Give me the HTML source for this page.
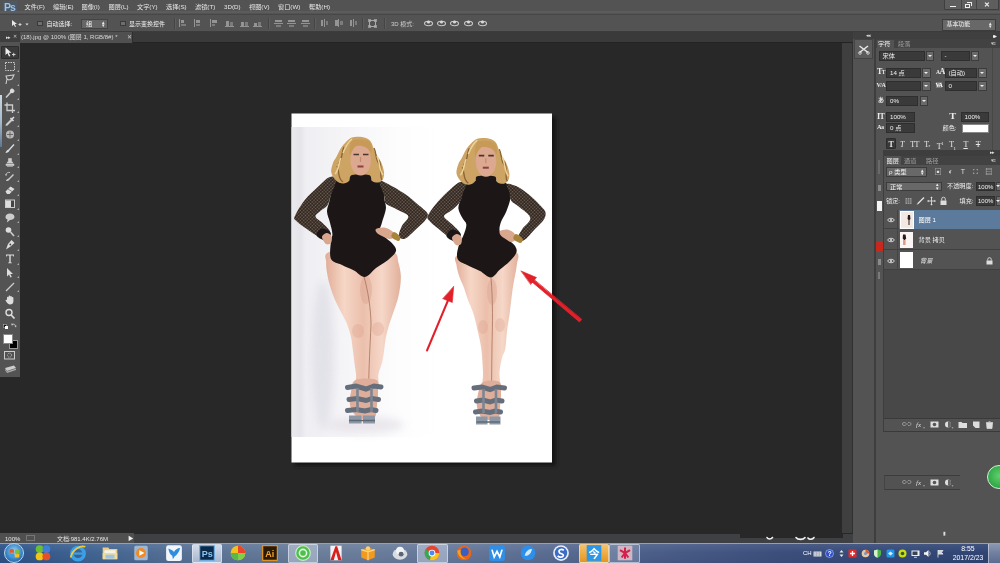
<!DOCTYPE html>
<html lang="zh-CN">
<head>
<meta charset="utf-8">
<title>Photoshop</title>
<style>
*{box-sizing:border-box;margin:0;padding:0}
i{font-style:normal}
html,body{width:1000px;height:563px;overflow:hidden;background:#282828}
body{will-change:transform;transform:translateZ(0);position:relative;font-family:"Liberation Sans","Noto Sans CJK SC",sans-serif;font-size:6.2px;color:#dcdcdc;line-height:1}
.abs{position:absolute}
#menubar{left:0;top:0;width:1000px;height:14px;background:linear-gradient(#535353 11px,#5c5c5c 11.5px,#5c5c5c 12.5px,#535353 13px)}
#menubar span{position:absolute;top:4.2px;white-space:nowrap;color:#e6e6e6}
#optbar{left:0;top:14px;width:1000px;height:18px;background:#535353;border-top:1px solid #474747;border-bottom:1px solid #3c3c3c}
#tabbar{left:0;top:32px;width:853px;height:11px;background:#3a3a3a;border-bottom:1px solid #232323}
#work{left:20px;top:43px;width:822px;height:491px;background:#282828}
#vscroll{left:841.5px;top:43px;width:11.5px;height:491px;background:#3f3f3f;border-right:1.5px solid #303030}
#status{left:0;top:533px;width:853px;height:10px;background:linear-gradient(#282828 1px,#3e4043 1.5px)}
#tools{left:0;top:32px;width:20px;height:345px;background:#535353}
#toolsbelow{left:0;top:377px;width:20px;height:156px;background:#282828}
#dock{left:853px;top:32px;width:147px;height:511px;background:#535353}
#taskbar{left:0;top:542.5px;width:1000px;height:20.5px}
.wb{background:#6a6a6a;border:1px solid #3e3e3e;border-radius:1px}
.wb u{position:absolute;background:#eee;text-decoration:none}
.cb{width:5.5px;height:5.5px;background:#6e6e6e;border:1px solid #3a3a3a}
.sep{top:3px;width:1px;height:11px;background:#454545;border-right:1px solid #5e5e5e;width:2px;text-decoration:none}
.al{width:10px;height:9px}
.al u{position:absolute;background:#949494;text-decoration:none}
.fb{background:#3a3a3a;border:1px solid #2e2e2e;overflow:hidden}
.fb span{position:absolute;left:3px;top:1px;color:#f0f0f0;white-space:nowrap}
.ab{background:#6a6a6a;border:1px solid #3c3c3c}
.ab b{position:absolute;left:50%;top:50%;margin:-1px 0 0 -2px;width:0;height:0;border-left:2px solid transparent;border-right:2px solid transparent;border-top:2.500px solid #f0f0f0}
.ic{color:#ececec;font-size:8px;font-weight:bold;font-family:"Liberation Serif",serif;white-space:nowrap;letter-spacing:-0.5px;margin-top:-0.5px}
.ic small{font-size:5.5px}
.tt{width:10px;text-align:center;color:#e8e8e8;font-size:8px;font-family:"Liberation Serif",serif;white-space:nowrap;letter-spacing:-0.500px}
.tt small,.tt sup,.tt sub{font-size:5px}
</style>
</head>
<body>
<!-- MENUBAR -->
<div id="menubar" class="abs">
<b class="abs" style="left:3px;top:1px;width:13.500px;height:10.500px;background:rgba(60,105,150,0.28)"></b><b class="abs" style="left:4px;top:1.500px;font-size:10.500px;color:#9cc3e6;font-weight:bold;letter-spacing:-1px;font-family:'Liberation Sans',sans-serif">Ps</b>
<span style="left:24.500px">文件(F)</span><span style="left:53px">编辑(E)</span><span style="left:81.500px">图像(I)</span><span style="left:108.500px">图层(L)</span><span style="left:137px">文字(Y)</span><span style="left:166px">选择(S)</span><span style="left:195px">滤镜(T)</span><span style="left:224px">3D(D)</span><span style="left:249px">视图(V)</span><span style="left:278px">窗口(W)</span><span style="left:309px">帮助(H)</span>
<div class="abs" style="left:944px;top:0;width:54.500px;height:9.500px;background:#5e5e5e;border:1px solid #3f3f3f;border-top:none;border-radius:0 0 1.500px 1.500px">
<i class="abs" style="left:5px;top:5.500px;width:6px;height:1.800px;background:#f0f0f0"></i>
<i class="abs" style="left:15.500px;top:0;width:1px;height:8.500px;background:#444"></i>
<i class="abs" style="left:20px;top:3.500px;width:5px;height:4px;border:1px solid #eee"></i><i class="abs" style="left:22px;top:1.800px;width:5px;height:4px;border:1px solid #eee;border-left:none;border-bottom:none"></i>
<i class="abs" style="left:30.500px;top:0;width:1px;height:8.500px;background:#444"></i>
<em class="abs" style="left:38.500px;top:0.500px;font-size:7px;color:#f0f0f0;font-style:normal;font-weight:bold">✕</em>
</div>
</div>
<!-- OPTIONS -->
<div id="optbar" class="abs">
<svg class="abs" style="left:11px;top:4px" width="18" height="9" viewBox="0 0 18 9"><path d="M1,1 L1,7 L2.800,5.500 L4,8 L5,7.500 L3.800,5 L6,5 Z" fill="#e8e8e8"/><path d="M7.500,5.500 h3 M9,4 v3" stroke="#ddd" stroke-width="0.900"/><path d="M14.500,4.500 h3 l-1.500,2z" fill="#ddd"/></svg>
<i class="abs cb" style="left:37px;top:5.500px"></i>
<span class="abs" style="left:46.500px;top:6px;color:#f0f0f0;font-size:6px">自动选择:</span>
<i class="abs" style="left:81px;top:4px;width:27px;height:9.500px;background:#666;border:1px solid #444"><span class="abs" style="left:4px;top:1px;color:#f4f4f4">组</span><span class="abs" style="left:20px;top:0.500px;font-size:5px;color:#eee;line-height:3.500px">▴<br>▾</span></i>
<i class="abs cb" style="left:120px;top:5.500px"></i>
<span class="abs" style="left:129px;top:6px;color:#f0f0f0;font-size:6px">显示变换控件</span>
<u class="abs sep" style="left:174px"></u><u class="abs sep" style="left:268px"></u><u class="abs sep" style="left:314px"></u><u class="abs sep" style="left:362px"></u><u class="abs sep" style="left:384px"></u>
<i class="abs al" style="left:179px;top:4px"><u style="left:0;top:0;width:1px;height:8px"></u><u style="left:2px;top:1px;width:3px;height:2.5px"></u><u style="left:2px;top:4.5px;width:5px;height:2.5px;background:#7c7c7c"></u></i><i class="abs al" style="left:194px;top:4px"><u style="left:0;top:0;width:1px;height:8px"></u><u style="left:2px;top:1px;width:4px;height:2.5px"></u><u style="left:2px;top:4.5px;width:4px;height:2.5px;background:#7c7c7c"></u></i><i class="abs al" style="left:210px;top:4px"><u style="left:0;top:0;width:1px;height:8px"></u><u style="left:2px;top:1px;width:5px;height:2.5px"></u><u style="left:2px;top:4.5px;width:3px;height:2.5px;background:#7c7c7c"></u></i><i class="abs al" style="left:224.5px;top:4px"><u style="left:0;top:7px;width:9px;height:1px"></u><u style="left:1px;top:2px;width:3px;height:5px"></u><u style="left:5px;top:3px;width:3px;height:4px;background:#7c7c7c"></u></i><i class="abs al" style="left:239.5px;top:4px"><u style="left:0;top:7px;width:9px;height:1px"></u><u style="left:1px;top:3px;width:3px;height:4px"></u><u style="left:5px;top:3px;width:3px;height:4px;background:#7c7c7c"></u></i><i class="abs al" style="left:253px;top:4px"><u style="left:0;top:7px;width:9px;height:1px"></u><u style="left:1px;top:4px;width:3px;height:3px"></u><u style="left:5px;top:3px;width:3px;height:4px;background:#7c7c7c"></u></i><i class="abs al" style="left:274px;top:4px"><u style="left:0;top:4px;width:9px;height:1px"></u><u style="left:1px;top:1px;width:7px;height:2px"></u><u style="left:2px;top:6px;width:5px;height:2px;background:#7c7c7c"></u></i><i class="abs al" style="left:287px;top:4px"><u style="left:0;top:4px;width:9px;height:1px"></u><u style="left:1px;top:1px;width:7px;height:2px"></u><u style="left:2px;top:6px;width:5px;height:2px;background:#7c7c7c"></u></i><i class="abs al" style="left:300.5px;top:4px"><u style="left:0;top:4px;width:9px;height:1px"></u><u style="left:1px;top:1px;width:7px;height:2px"></u><u style="left:2px;top:6px;width:5px;height:2px;background:#7c7c7c"></u></i><i class="abs al" style="left:319.5px;top:4px"><u style="left:4px;top:0;width:1px;height:8px"></u><u style="left:1px;top:1px;width:2.5px;height:6px"></u><u style="left:6px;top:2px;width:2.5px;height:4px;background:#7c7c7c"></u></i><i class="abs al" style="left:334px;top:4px"><u style="left:4px;top:0;width:1px;height:8px"></u><u style="left:1px;top:1px;width:2.5px;height:6px"></u><u style="left:6px;top:2px;width:2.5px;height:4px;background:#7c7c7c"></u></i><i class="abs al" style="left:348.5px;top:4px"><u style="left:4px;top:0;width:1px;height:8px"></u><u style="left:1px;top:1px;width:2.5px;height:6px"></u><u style="left:6px;top:2px;width:2.5px;height:4px;background:#7c7c7c"></u></i><i class="abs al" style="left:367.5px;top:3.5px"><u style="left:0;top:0;width:3px;height:3px"></u><u style="left:6px;top:0;width:3px;height:3px"></u><u style="left:0;top:6px;width:3px;height:3px"></u><u style="left:6px;top:6px;width:3px;height:3px"></u><u style="left:1px;top:1px;width:7px;height:7px;background:none;border:1px solid #aaa"></u></i><i class="abs" style="left:424.0px;top:4px;width:9px;height:8px"><svg width="9" height="8" viewBox="0 0 9 8"><ellipse cx="4.500" cy="4.500" rx="4" ry="2.200" fill="none" stroke="#c8c8c8" stroke-width="1.100"/><circle cx="4.500" cy="3" r="1.600" fill="#d8d8d8"/></svg></i><i class="abs" style="left:436.5px;top:4px;width:9px;height:8px"><svg width="9" height="8" viewBox="0 0 9 8"><ellipse cx="4.500" cy="4.500" rx="4" ry="2.200" fill="none" stroke="#c8c8c8" stroke-width="1.100"/><circle cx="4.500" cy="3" r="1.600" fill="#d8d8d8"/></svg></i><i class="abs" style="left:449.5px;top:4px;width:9px;height:8px"><svg width="9" height="8" viewBox="0 0 9 8"><ellipse cx="4.500" cy="4.500" rx="4" ry="2.200" fill="none" stroke="#c8c8c8" stroke-width="1.100"/><circle cx="4.500" cy="3" r="1.600" fill="#d8d8d8"/></svg></i><i class="abs" style="left:463.5px;top:4px;width:9px;height:8px"><svg width="9" height="8" viewBox="0 0 9 8"><ellipse cx="4.500" cy="4.500" rx="4" ry="2.200" fill="none" stroke="#c8c8c8" stroke-width="1.100"/><circle cx="4.500" cy="3" r="1.600" fill="#d8d8d8"/></svg></i><i class="abs" style="left:478.0px;top:4px;width:9px;height:8px"><svg width="9" height="8" viewBox="0 0 9 8"><ellipse cx="4.500" cy="4.500" rx="4" ry="2.200" fill="none" stroke="#c8c8c8" stroke-width="1.100"/><circle cx="4.500" cy="3" r="1.600" fill="#d8d8d8"/></svg></i>
<span class="abs" style="left:391px;top:6px;color:#cfcfcf;font-size:6px">3D 模式:</span>
<i class="abs" style="left:942px;top:4px;width:54px;height:11.500px;background:#686868;border:1px solid #3c3c3c"><span class="abs" style="left:3.500px;top:2px;color:#f4f4f4;font-size:5.900px">基本功能</span><span class="abs" style="left:46px;top:1.500px;font-size:5px;color:#eee;line-height:3.500px">▴<br>▾</span></i>
</div>
<!-- TABBAR -->
<div id="tabbar" class="abs">
<div class="abs" style="left:20px;top:0;width:113px;height:10.500px;background:#505050;border-right:1px solid #2e2e2e"><span class="abs" style="left:1px;top:2px;color:#d8d8d8;white-space:nowrap;font-size:6px">(18).jpg @ 100% (图层 1, RGB/8#) *</span><span class="abs" style="left:107px;top:2.500px;color:#ccc;font-size:5.500px">✕</span></div>
</div>
<!-- WORK -->
<div id="work" class="abs"></div>
<div id="vscroll" class="abs"></div>
<!-- PHOTO -->
<svg class="abs" style="left:0;top:0" width="1000" height="563" viewBox="0 0 1000 563">
<defs>
<linearGradient id="bg1" x1="0" x2="1" y1="0" y2="0"><stop offset="0" stop-color="#e9e9ee"/><stop offset="0.060" stop-color="#e4e4ea"/><stop offset="0.100" stop-color="#efeff3"/><stop offset="0.450" stop-color="#f7f7f9"/><stop offset="0.750" stop-color="#fdfdfe"/><stop offset="1" stop-color="#ffffff"/></linearGradient>
<linearGradient id="skin" x1="0" x2="1" y1="0" y2="0"><stop offset="0" stop-color="#e0ad98"/><stop offset="0.250" stop-color="#f6d6c6"/><stop offset="0.500" stop-color="#ebbfac"/><stop offset="0.750" stop-color="#f6d7c8"/><stop offset="1" stop-color="#e1b09b"/></linearGradient>
<pattern id="mesh" width="2.400" height="2.400" patternUnits="userSpaceOnUse" patternTransform="rotate(45)"><rect width="2.400" height="2.400" fill="#2c2420"/><circle cx="1.200" cy="1.200" r="0.750" fill="#7d6a59"/></pattern>
<filter id="blur2" x="-5%" y="-5%" width="110%" height="110%"><feGaussianBlur stdDeviation="1.400"/></filter>
<filter id="blur3" x="-50%" y="-50%" width="200%" height="200%"><feGaussianBlur stdDeviation="4"/></filter>
<filter id="blur1" x="-5%" y="-5%" width="110%" height="110%"><feGaussianBlur stdDeviation="0.550"/></filter>
</defs>
<rect x="295" y="117" width="261.500" height="349.500" fill="#191919" filter="url(#blur2)"/>
<rect x="291.500" y="113.500" width="260.500" height="349" fill="#ffffff"/>
<rect x="291.500" y="127" width="146" height="310" fill="url(#bg1)"/>
<ellipse cx="323" cy="355" rx="11" ry="75" fill="#dcdce4" opacity="0.700" filter="url(#blur3)"/>
<ellipse cx="365" cy="425" rx="40" ry="8" fill="#e6e2e8" opacity="0.800" filter="url(#blur3)"/>
<g filter="url(#blur1)">
<g id="fig1">
<path d="M329.0,252.0 C322.5,254.9 326.5,258.6 326.2,262.4 C325.9,266.2 326.7,270.8 327.4,274.9 C328.1,279.0 329.1,283.1 330.4,287.3 C331.6,291.5 333.1,295.7 334.9,299.8 C336.7,303.9 339.0,308.1 341.1,312.2 C343.2,316.3 345.7,320.5 347.3,324.7 C348.9,328.9 350.1,333.0 351.0,337.1 C351.9,341.2 352.2,345.5 352.8,349.6 C353.4,353.8 353.8,357.9 354.3,362.0 C354.8,366.1 355.5,369.7 356.0,374.4 C356.5,379.1 353.9,387.4 357.3,390.0 C360.8,392.6 373.2,392.6 376.7,390.0 C380.2,387.4 377.5,379.1 378.4,374.4 C379.3,369.7 381.2,366.1 382.2,362.0 C383.2,357.9 383.6,353.8 384.2,349.6 C384.8,345.5 385.1,341.2 385.9,337.1 C386.7,333.0 387.9,328.9 389.1,324.7 C390.4,320.5 392.0,316.3 393.4,312.2 C394.8,308.1 396.5,303.9 397.6,299.8 C398.7,295.7 399.6,291.5 400.1,287.3 C400.6,283.1 401.1,279.0 400.8,274.9 C400.5,270.8 399.6,266.2 398.4,262.4 C397.2,258.6 399.0,254.9 393.4,252.0 C387.8,249.1 375.7,245.0 365.0,245.0 C354.3,245.0 335.5,249.1 329.0,252.0Z" fill="url(#skin)" />
<ellipse cx="358" cy="331" rx="6" ry="7" fill="#dc9c88" opacity="0.300"/><ellipse cx="378" cy="329" rx="6" ry="7" fill="#dc9c88" opacity="0.300"/><ellipse cx="366" cy="290" rx="6" ry="14" fill="#d9a08c" opacity="0.400"/>
<path d="M363.500,275 C368,290 371,310 371,325 C370,345 369,365 368.500,390" stroke="#b07a62" stroke-width="0.900" fill="none"/>
<path d="M355.5,380.0 C359.8,378.0 372.8,378.0 376.5,380.0 C380.2,382.0 377.9,387.8 378.0,392.0 C378.1,396.2 377.5,400.8 377.0,405.0 C376.5,409.2 376.8,414.7 375.0,417.0 C373.2,419.3 369.0,419.0 366.0,419.0 C363.0,419.0 359.7,419.3 357.0,417.0 C354.3,414.7 351.0,409.2 350.0,405.0 C349.0,400.8 350.1,396.2 351.0,392.0 C351.9,387.8 351.2,382.0 355.5,380.0Z" fill="#dfae9a" />
<path d="M347.500,387.500 L356,386 L366,389 L374,386 L381,387" stroke="#656e7a" stroke-width="5" fill="none" stroke-linecap="round"/>
<path d="M349,399.500 L357,398.500 L366,400.500 L372,398.500 L378.500,399.500" stroke="#656e7a" stroke-width="5" fill="none" stroke-linecap="round"/>
<path d="M347.500,410.500 L356,409.500 L365,411 L371,409.500 L376,410.500" stroke="#656e7a" stroke-width="5" fill="none" stroke-linecap="round"/>
<path d="M357.500,388 V412 M371.500,388 V412" stroke="#7c8591" stroke-width="2.600" fill="none"/>
<path d="M349,415.500 h12.500 v8 h-12.500z M363,415.500 h12 v8 h-12z" fill="#8d98a6"/>
<path d="M349,420.500h26" stroke="#5f6874" stroke-width="1.500"/>
<path d="M350,172 h21 v12 h-21z" fill="#1d1919"/>
<path d="M336.3,179.6 C339.0,177.4 344.1,177.0 348.0,177.0 C351.9,177.0 356.0,179.5 360.0,179.5 C364.0,179.5 368.5,176.7 372.0,177.0 C375.5,177.3 378.9,179.3 381.0,181.5 C383.1,183.7 383.9,187.1 384.5,190.0 C385.1,192.9 384.1,195.7 384.3,198.8 C384.5,201.9 386.3,204.4 385.9,208.4 C385.5,212.4 382.9,218.9 381.9,222.7 C380.9,226.5 379.3,228.4 380.0,231.0 C380.7,233.6 383.9,235.9 386.0,238.0 C388.1,240.1 390.6,241.3 392.3,243.5 C394.0,245.7 396.7,248.2 396.0,251.0 C395.3,253.8 391.3,257.2 388.0,260.0 C384.7,262.8 379.8,265.2 376.0,268.0 C372.2,270.8 368.7,276.6 365.0,277.0 C361.3,277.4 357.8,272.5 354.0,270.5 C350.2,268.5 345.8,266.9 342.0,265.0 C338.2,263.1 332.9,262.8 331.0,259.0 C329.1,255.2 330.6,246.2 330.8,242.0 C331.0,237.8 332.5,237.2 332.4,234.0 C332.3,230.8 330.9,226.4 330.0,222.7 C329.1,218.9 327.1,214.9 327.0,211.5 C326.9,208.1 328.4,205.6 329.2,202.0 C330.0,198.4 330.8,193.7 332.0,190.0 C333.2,186.3 333.6,181.8 336.3,179.6Z" fill="#1d1919" />
<path d="M336.5,179.0 C336.2,176.0 332.1,176.0 329.2,177.2 C326.2,178.4 322.9,182.1 318.8,186.0 C314.7,189.9 308.4,195.3 304.4,200.4 C300.4,205.5 296.1,212.9 294.8,216.3 C293.5,219.7 294.0,218.6 296.4,221.0 C298.8,223.4 305.1,227.9 309.2,230.7 C313.3,233.5 318.4,237.1 321.2,238.0 C324.0,238.9 324.5,237.1 326.0,236.0 C327.5,234.9 330.5,233.6 330.0,231.5 C329.5,229.4 325.4,226.0 323.0,223.5 C320.6,221.0 315.8,218.8 315.5,216.6 C315.2,214.4 319.0,212.3 321.0,210.5 C323.0,208.7 325.6,208.1 327.3,205.5 C329.0,202.9 329.5,199.4 331.0,195.0 C332.5,190.6 336.8,182.0 336.5,179.0Z" fill="url(#mesh)" />
<path d="M379.5,181.2 C380.3,179.4 384.8,182.3 389.0,184.4 C393.2,186.5 400.2,190.7 405.0,194.0 C409.8,197.3 414.2,201.2 417.9,204.4 C421.6,207.6 426.1,210.7 427.4,213.2 C428.7,215.7 427.6,216.9 425.8,219.5 C424.0,222.1 419.8,225.8 416.3,229.0 C412.8,232.2 407.9,237.5 405.0,238.7 C402.1,239.9 399.5,238.1 399.0,236.0 C398.5,233.9 400.3,229.3 401.9,226.0 C403.4,222.7 408.9,219.0 408.3,216.3 C407.7,213.6 401.7,212.1 398.0,210.0 C394.3,207.9 388.2,206.1 385.9,203.6 C383.6,201.1 385.1,198.7 384.0,195.0 C382.9,191.3 378.7,183.0 379.5,181.2Z" fill="url(#mesh)" />
<path d="M316.5,235.0 C316.4,233.2 319.2,228.9 321.5,228.5 C323.8,228.1 329.3,230.5 330.5,232.5 C331.7,234.5 329.9,239.3 328.5,240.5 C327.1,241.7 324.0,240.4 322.0,239.5 C320.0,238.6 316.6,236.8 316.5,235.0Z" fill="#1d1919" />
<path d="M376.0,229.0 C377.2,228.1 381.3,227.2 384.0,227.5 C386.7,227.8 390.2,229.6 392.0,231.0 C393.8,232.4 395.3,234.7 395.0,236.0 C394.7,237.3 392.2,239.0 390.0,239.0 C387.8,239.0 384.2,237.0 382.0,236.0 C379.8,235.0 378.0,234.2 377.0,233.0 C376.0,231.8 374.8,229.9 376.0,229.0Z" fill="#d9a78e" />
<path d="M394.0,232.0 C395.4,231.9 399.2,235.0 400.0,236.5 C400.8,238.0 399.9,240.9 398.5,241.0 C397.1,241.1 392.2,238.5 391.5,237.0 C390.8,235.5 392.6,232.1 394.0,232.0Z" fill="#a8843a" />
<path d="M322.0,237.0 C322.1,235.2 324.9,233.2 326.5,233.0 C328.1,232.8 330.8,234.3 331.5,236.0 C332.2,237.7 331.9,241.7 331.0,243.0 C330.1,244.3 327.5,245.0 326.0,244.0 C324.5,243.0 321.9,238.8 322.0,237.0Z" fill="#d9a78e" />
<path d="M358.0,136.8 C360.3,136.9 363.8,137.1 366.0,138.0 C368.2,138.9 369.5,139.7 371.0,142.0 C372.5,144.3 373.3,148.7 375.0,152.0 C376.7,155.3 379.5,158.7 381.0,162.0 C382.5,165.3 383.7,169.2 384.0,172.0 C384.3,174.8 383.9,177.2 383.0,179.0 C382.1,180.8 380.3,182.2 378.5,182.5 C376.7,182.8 373.6,182.2 372.0,181.0 C370.4,179.8 372.3,176.0 369.0,175.0 C365.7,174.0 355.3,174.0 352.0,175.0 C348.7,176.0 350.5,179.6 349.0,181.0 C347.5,182.4 345.2,183.6 343.0,183.5 C340.8,183.4 338.0,182.4 336.0,180.5 C334.0,178.6 331.7,175.2 331.2,172.3 C330.7,169.4 332.2,165.5 333.0,163.0 C333.8,160.5 334.9,159.8 336.2,157.3 C337.5,154.8 339.2,150.7 341.0,148.0 C342.8,145.3 344.9,142.9 346.7,141.2 C348.5,139.4 350.1,138.2 352.0,137.5 C353.9,136.8 355.7,136.7 358.0,136.8Z" fill="#cda463" />
<path d="M337.0,166.0 C340.0,172.0 337.0,178.0 343.0,182.0 M379.0,160.0 C383.0,168.0 379.0,176.0 382.0,180.0 M344.0,147.0 C341.0,153.0 343.0,159.0 338.0,164.0 M374.0,148.0 C377.0,154.0 375.0,160.0 380.0,165.0" stroke="#8a6234" stroke-width="1.300" fill="none"/>
<path d="M341.0,158.0 C338.0,164.0 339.0,170.0 335.0,174.0 M377.0,156.0 C380.0,162.0 379.0,170.0 383.0,175.0 M352.0,139.0 C347.0,143.0 345.0,148.0 343.0,153.0" stroke="#ecd498" stroke-width="1.500" fill="none"/>
<ellipse cx="360.7" cy="160.0" rx="10.300" ry="15.500" fill="#dca88f"/>
<path d="M352.0,140.5 C356.0,139.0 365.0,139.0 370.0,142.0 C372.0,146.0 372.0,150.0 371.5,153.0 C368.0,147.0 362.0,145.0 356.0,146.0 C353.0,148.0 351.0,152.0 350.0,156.0 C349.0,150.0 350.0,144.0 352.0,140.5Z" fill="#c89a58"/>
<path d="M353.5,154.5h5.500M363.0,154.5h5.500" stroke="#4a342e" stroke-width="1.700"/>
<path d="M357.5,166.5h6" stroke="#8c3f42" stroke-width="2"/>
<path d="M360.5,157.0 v5" stroke="#c08a72" stroke-width="1.200"/>
</g>
<g id="fig2">
<path d="M457.6,255.0 C452.4,258.3 456.2,261.3 456.5,265.0 C456.8,268.7 458.3,273.4 459.5,277.0 C460.7,280.6 462.1,282.8 463.5,286.6 C464.9,290.4 466.4,295.6 468.0,300.0 C469.6,304.4 471.7,308.1 473.3,313.3 C474.9,318.5 476.4,325.1 477.7,331.0 C479.0,336.9 480.4,342.0 481.3,348.8 C482.2,355.6 482.6,365.1 483.0,372.0 C483.4,378.9 480.8,387.0 483.5,390.0 C486.2,393.0 496.3,393.0 499.0,390.0 C501.7,387.0 499.0,377.3 499.5,372.0 C500.0,366.7 501.0,361.9 502.0,358.0 C503.0,354.1 504.5,353.3 505.3,348.8 C506.1,344.3 506.3,336.9 507.0,331.0 C507.7,325.1 508.7,320.7 509.7,313.3 C510.7,305.9 511.8,294.7 513.0,286.6 C514.2,278.6 516.3,270.8 516.8,265.0 C517.3,259.2 520.8,255.3 516.0,252.0 C511.2,248.7 497.7,244.5 488.0,245.0 C478.3,245.5 462.9,251.7 457.6,255.0Z" fill="url(#skin)" />
<ellipse cx="483" cy="327" rx="5" ry="7" fill="#dc9c88" opacity="0.300"/><ellipse cx="500" cy="325" rx="5" ry="7" fill="#dc9c88" opacity="0.300"/><ellipse cx="492" cy="292" rx="5" ry="13" fill="#d9a08c" opacity="0.400"/>
<path d="M491,278 C493,300 492.500,325 492,345 L491.500,390" stroke="#b07a62" stroke-width="0.900" fill="none"/>
<path d="M483.0,382.0 C486.6,380.0 496.5,380.0 499.5,382.0 C502.5,384.0 500.9,389.8 501.0,394.0 C501.1,398.2 500.4,403.0 500.0,407.0 C499.6,411.0 500.2,415.8 498.5,418.0 C496.8,420.2 492.8,420.0 490.0,420.0 C487.2,420.0 484.2,420.2 482.0,418.0 C479.8,415.8 477.7,411.0 477.0,407.0 C476.3,403.0 477.0,398.2 478.0,394.0 C479.0,389.8 479.4,384.0 483.0,382.0Z" fill="#dfae9a" />
<path d="M474,388 L482,387 L490,389.500 L497,387 L504.500,388" stroke="#656e7a" stroke-width="5" fill="none" stroke-linecap="round"/>
<path d="M476.500,401 L483,400 L490,402 L496,400 L502,401" stroke="#656e7a" stroke-width="5" fill="none" stroke-linecap="round"/>
<path d="M475.500,412 L482,411 L490,412.500 L495,411 L500.500,412" stroke="#656e7a" stroke-width="5" fill="none" stroke-linecap="round"/>
<path d="M483.500,389 V413 M496,389 V413" stroke="#7c8591" stroke-width="2.600" fill="none"/>
<path d="M476,416.500 h11.500 v8 h-11.500z M489.500,416.500 h11 v8 h-11z" fill="#8d98a6"/>
<path d="M476.500,422h23.500" stroke="#5f6874" stroke-width="1.500"/>
<path d="M475.500,173.500 h21 v12 h-21z" fill="#1d1919"/>
<path d="M466.3,183.6 C468.5,182.1 472.7,181.0 476.0,181.0 C479.3,181.0 482.3,183.5 486.0,183.5 C489.7,183.5 494.7,181.1 498.0,181.0 C501.3,180.9 504.1,181.5 506.0,183.0 C507.9,184.5 508.8,187.4 509.5,190.0 C510.2,192.6 510.8,195.2 510.3,198.8 C509.8,202.4 507.9,207.5 506.3,211.5 C504.7,215.5 501.8,219.2 500.7,222.7 C499.6,226.2 498.9,229.6 500.0,232.3 C501.1,235.0 504.6,236.9 507.0,239.0 C509.4,241.1 512.7,242.8 514.3,245.0 C515.9,247.2 517.2,249.3 516.5,252.0 C515.8,254.7 512.8,258.1 510.0,261.0 C507.2,263.9 503.2,266.8 500.0,269.5 C496.8,272.2 494.3,277.2 491.0,277.5 C487.7,277.8 484.0,273.1 480.0,271.0 C476.0,268.9 470.7,267.0 467.0,265.0 C463.3,263.0 459.0,262.1 457.6,259.0 C456.2,255.9 457.3,250.9 458.4,246.7 C459.5,242.5 462.7,237.7 464.0,234.0 C465.3,230.3 466.6,227.0 466.3,224.3 C466.0,221.6 463.7,220.7 462.4,218.0 C461.1,215.3 458.7,211.6 458.4,208.4 C458.1,205.2 460.0,201.9 460.8,198.8 C461.6,195.7 462.1,192.5 463.0,190.0 C463.9,187.5 464.1,185.1 466.3,183.6Z" fill="#1d1919" />
<path d="M466.5,183.0 C466.0,181.2 462.7,181.0 460.0,182.0 C457.3,183.0 454.1,185.9 450.4,189.2 C446.7,192.5 441.3,197.6 437.6,202.0 C433.9,206.4 429.3,212.3 428.0,215.5 C426.7,218.7 427.5,218.5 429.6,221.0 C431.7,223.5 437.2,227.8 440.8,230.7 C444.4,233.6 448.7,237.6 451.2,238.7 C453.7,239.8 454.5,237.9 456.0,237.0 C457.5,236.1 460.7,235.1 460.0,233.0 C459.3,230.9 454.7,227.1 452.0,224.3 C449.3,221.5 444.0,218.7 444.0,216.3 C444.0,213.9 449.3,212.4 452.0,210.0 C454.7,207.6 458.2,204.8 460.0,202.0 C461.8,199.2 461.9,196.2 463.0,193.0 C464.1,189.8 467.0,184.8 466.5,183.0Z" fill="url(#mesh)" />
<path d="M507.0,184.0 C508.6,183.3 514.9,185.4 519.0,187.6 C523.1,189.8 528.1,194.0 531.9,197.2 C535.6,200.4 539.2,204.3 541.5,206.8 C543.8,209.3 545.1,210.3 545.5,212.4 C545.9,214.5 545.6,216.7 543.9,219.5 C542.1,222.3 538.3,225.5 535.0,229.0 C531.7,232.5 526.7,238.8 523.9,240.3 C521.1,241.8 518.3,239.9 518.0,238.0 C517.7,236.1 520.2,232.3 522.3,229.0 C524.3,225.7 530.8,221.7 530.3,218.0 C529.8,214.3 522.2,209.7 519.0,206.8 C515.8,203.9 512.6,202.9 511.0,200.4 C509.4,197.9 510.2,194.7 509.5,192.0 C508.8,189.3 505.4,184.7 507.0,184.0Z" fill="url(#mesh)" />
<path d="M446.5,236.0 C446.4,234.2 449.2,229.9 451.5,229.5 C453.8,229.1 459.3,231.5 460.5,233.5 C461.7,235.5 459.9,240.3 458.5,241.5 C457.1,242.7 454.0,241.4 452.0,240.5 C450.0,239.6 446.6,237.8 446.5,236.0Z" fill="#1d1919" />
<path d="M500.0,231.0 C501.1,230.1 504.7,229.2 507.0,229.5 C509.3,229.8 512.5,231.4 514.0,233.0 C515.5,234.6 516.5,237.5 516.0,239.0 C515.5,240.5 513.0,242.2 511.0,242.0 C509.0,241.8 505.8,239.2 504.0,238.0 C502.2,236.8 501.2,236.2 500.5,235.0 C499.8,233.8 498.9,231.9 500.0,231.0Z" fill="#d9a78e" />
<path d="M516.0,234.0 C517.5,233.9 521.8,237.0 522.5,238.5 C523.2,240.0 522.0,242.9 520.5,243.0 C519.0,243.1 514.2,240.5 513.5,239.0 C512.8,237.5 514.5,234.1 516.0,234.0Z" fill="#a8843a" />
<path d="M452.0,238.0 C452.1,236.2 454.9,234.2 456.5,234.0 C458.1,233.8 460.8,235.3 461.5,237.0 C462.2,238.7 461.9,242.7 461.0,244.0 C460.1,245.3 457.5,246.0 456.0,245.0 C454.5,244.0 451.9,239.8 452.0,238.0Z" fill="#d9a78e" />
<path d="M483.3,138.0 C485.6,138.1 489.1,138.3 491.3,139.2 C493.5,140.1 494.8,140.9 496.3,143.2 C497.8,145.5 498.6,149.9 500.3,153.2 C502.0,156.5 504.8,159.9 506.3,163.2 C507.8,166.5 509.0,170.4 509.3,173.2 C509.6,176.0 509.2,178.4 508.3,180.2 C507.4,181.9 505.6,183.4 503.8,183.7 C502.0,184.0 498.9,183.4 497.3,182.2 C495.7,180.9 497.6,177.2 494.3,176.2 C491.0,175.2 480.6,175.2 477.3,176.2 C474.0,177.2 475.8,180.8 474.3,182.2 C472.8,183.6 470.5,184.8 468.3,184.7 C466.1,184.6 463.3,183.6 461.3,181.7 C459.3,179.8 457.0,176.4 456.5,173.5 C456.0,170.6 457.5,166.7 458.3,164.2 C459.1,161.7 460.2,161.0 461.5,158.5 C462.8,156.0 464.6,151.9 466.3,149.2 C468.1,146.5 470.2,144.1 472.0,142.4 C473.8,140.6 475.4,139.4 477.3,138.7 C479.2,138.0 481.0,137.9 483.3,138.0Z" fill="#cda463" />
<path d="M462.3,167.2 C465.3,173.2 462.3,179.2 468.3,183.2 M504.3,161.2 C508.3,169.2 504.3,177.2 507.3,181.2 M469.3,148.2 C466.3,154.2 468.3,160.2 463.3,165.2 M499.3,149.2 C502.3,155.2 500.3,161.2 505.3,166.2" stroke="#8a6234" stroke-width="1.300" fill="none"/>
<path d="M466.3,159.2 C463.3,165.2 464.3,171.2 460.3,175.2 M502.3,157.2 C505.3,163.2 504.3,171.2 508.3,176.2 M477.3,140.2 C472.3,144.2 470.3,149.2 468.3,154.2" stroke="#ecd498" stroke-width="1.500" fill="none"/>
<ellipse cx="486.0" cy="161.2" rx="10.300" ry="15.500" fill="#dca88f"/>
<path d="M477.3,141.7 C481.3,140.2 490.3,140.2 495.3,143.2 C497.3,147.2 497.3,151.2 496.8,154.2 C493.3,148.2 487.3,146.2 481.3,147.2 C478.3,149.2 476.3,153.2 475.3,157.2 C474.3,151.2 475.3,145.2 477.3,141.7Z" fill="#c89a58"/>
<path d="M478.8,155.7h5.500M488.3,155.7h5.500" stroke="#4a342e" stroke-width="1.700"/>
<path d="M482.8,167.7h6" stroke="#8c3f42" stroke-width="2"/>
<path d="M485.8,158.2 v5" stroke="#c08a72" stroke-width="1.200"/>
</g>
</g>
<g fill="#e2202a" stroke="#e2202a" stroke-linecap="round" stroke-linejoin="round">
<line x1="427" y1="350.500" x2="449" y2="298" stroke-width="2"/>
<path d="M453.700,286.600 L452.300,302.500 L443,298.800 Z" stroke-width="0.600"/>
<path d="M581.500,319.500 L579.500,322 L531.500,281.500 L533.500,279.500 Z" stroke-width="0.800"/>
<path d="M521.200,271 L536.500,277.500 L530.800,284.300 Z" stroke-width="0.600"/>
</g>
</svg>
<!-- STATUS -->
<div id="status" class="abs">
<div class="abs" style="left:0;top:0;width:134px;height:10px;background:#505050"></div>
<span class="abs" style="left:5px;top:2.500px;color:#e8e8e8;font-size:6px">100%</span>
<i class="abs" style="left:26px;top:2px;width:9px;height:6px;border:1px solid #777"></i>
<span class="abs" style="left:57px;top:2.500px;color:#e8e8e8;font-size:6px;white-space:nowrap">文档:981.4K/2.76M</span>
<span class="abs" style="left:128px;top:2.500px;color:#eee;font-size:5.500px">▶</span>
</div>
<div class="abs" style="left:740px;top:533px;width:103px;height:4.500px;background:#282828"></div>
<svg class="abs" style="left:760px;top:535px" width="60" height="8" viewBox="0 0 60 8"><path d="M7,2.500 C8,4.500 11,4.500 12.500,2.500 M36,2.500 C38,5 43,5 45,2.500 M48,3 C49.500,5 52.500,4.500 54,2.500" fill="none" stroke="#f4f4f4" stroke-width="1.600" stroke-linecap="round"/></svg>
<!-- TOOLS -->
<div id="tools" class="abs">
<div class="abs" style="left:0;top:0;width:20px;height:10px;background:#3e3e3e"><span class="abs" style="left:6px;top:2.500px;font-size:5px;color:#ddd;letter-spacing:-1.500px">▸▸</span><span class="abs" style="left:13px;top:2px;font-size:5px;color:#ccc">✕</span></div>
<div class="abs" style="left:1px;top:13.500px;width:18px;height:13.500px;background:#3a3a3a;border:1px solid #2c2c2c;border-radius:1px"></div>
<svg class="abs" style="left:4px;top:14.90px" width="12" height="11" viewBox="0 0 12 11"><path d="M1.500,0.500 L1.500,8 L3.500,6.200 L5,9.500 L6.300,9 L4.800,5.800 L7.500,5.800 Z" fill="#eee"/><path d="M8,7.500h3.500M9.700,5.800v3.500" stroke="#ddd" stroke-width="0.900"/></svg>
<svg class="abs" style="left:4px;top:28.65px" width="12" height="11" viewBox="0 0 12 11"><rect x="1.500" y="1.500" width="9" height="8" fill="none" stroke="#ccc" stroke-width="1" stroke-dasharray="1.500,1"/></svg><i class="abs" style="left:16.500px;top:38.15px;width:0;height:0;border-left:2px solid transparent;border-bottom:2px solid #aaa"></i>
<svg class="abs" style="left:4px;top:42.40px" width="12" height="11" viewBox="0 0 12 11"><path d="M2,2 L10,1 L8,5 L5,6 L3,5 Z M3,5 L2,10" fill="none" stroke="#ccc" stroke-width="1.100"/></svg><i class="abs" style="left:16.500px;top:51.90px;width:0;height:0;border-left:2px solid transparent;border-bottom:2px solid #aaa"></i>
<svg class="abs" style="left:4px;top:56.15px" width="12" height="11" viewBox="0 0 12 11"><path d="M2,9.500 L7,4" stroke="#ccc" stroke-width="1.600"/><circle cx="8" cy="3" r="2.200" fill="#ddd"/><path d="M8,0v1.200M11,3h-1.200" stroke="#ccc" stroke-width="0.700"/></svg><i class="abs" style="left:16.500px;top:65.65px;width:0;height:0;border-left:2px solid transparent;border-bottom:2px solid #aaa"></i>
<svg class="abs" style="left:4px;top:69.90px" width="12" height="11" viewBox="0 0 12 11"><path d="M3,0.500 V8.500 H11 M0.500,3 H8.500 V11" fill="none" stroke="#ccc" stroke-width="1.300"/></svg><i class="abs" style="left:16.500px;top:79.40px;width:0;height:0;border-left:2px solid transparent;border-bottom:2px solid #aaa"></i>
<svg class="abs" style="left:4px;top:83.65px" width="12" height="11" viewBox="0 0 12 11"><path d="M1.500,10 L2,8 L7,3 L8.500,4.500 L3.500,9.500 Z" fill="#ccc"/><path d="M6.500,2 L9.500,5 M8,3 L10,1" stroke="#ddd" stroke-width="1.600"/></svg><i class="abs" style="left:16.500px;top:93.15px;width:0;height:0;border-left:2px solid transparent;border-bottom:2px solid #aaa"></i>
<svg class="abs" style="left:4px;top:97.40px" width="12" height="11" viewBox="0 0 12 11"><circle cx="6" cy="5.500" r="4" fill="#bbb"/><path d="M3,5.500h6M6,2.500v6" stroke="#555" stroke-width="0.800"/></svg><i class="abs" style="left:16.500px;top:106.90px;width:0;height:0;border-left:2px solid transparent;border-bottom:2px solid #aaa"></i>
<svg class="abs" style="left:4px;top:111.15px" width="12" height="11" viewBox="0 0 12 11"><path d="M1.500,10 C2,8 3,7 4.500,6.500 L9.500,1 L10.500,2 L5.500,7.500 C5,9 3.500,10 1.500,10Z" fill="#ddd"/></svg><i class="abs" style="left:16.500px;top:120.65px;width:0;height:0;border-left:2px solid transparent;border-bottom:2px solid #aaa"></i>
<svg class="abs" style="left:4px;top:124.90px" width="12" height="11" viewBox="0 0 12 11"><path d="M4.500,1.500 h3 v2.500 l1.500,2 h-6 l1.500,-2Z M2,7 h8 v1.500 h-8Z M3,9.500h6" fill="#ccc" stroke="#ccc" stroke-width="0.600"/></svg><i class="abs" style="left:16.500px;top:134.40px;width:0;height:0;border-left:2px solid transparent;border-bottom:2px solid #aaa"></i>
<svg class="abs" style="left:4px;top:138.65px" width="12" height="11" viewBox="0 0 12 11"><path d="M2,10 C2.500,8.500 3,8 4.500,7.500 L9,3 L10,4 L5.500,8.500 C5,9.500 3.500,10 2,10Z" fill="#ccc"/><path d="M2,4 C2,2 4,1 6,1.500" fill="none" stroke="#ccc" stroke-width="0.900"/><path d="M1,3.500 L2,5 L3.300,3.500Z" fill="#ccc"/></svg><i class="abs" style="left:16.500px;top:148.15px;width:0;height:0;border-left:2px solid transparent;border-bottom:2px solid #aaa"></i>
<svg class="abs" style="left:4px;top:152.40px" width="12" height="11" viewBox="0 0 12 11"><path d="M1.500,7.500 L6.500,2.500 L10.500,5 L5.500,10 L3,10 Z" fill="#ddd"/><path d="M4,5 L8,7.500" stroke="#666" stroke-width="0.800"/></svg><i class="abs" style="left:16.500px;top:161.90px;width:0;height:0;border-left:2px solid transparent;border-bottom:2px solid #aaa"></i>
<svg class="abs" style="left:4px;top:166.15px" width="12" height="11" viewBox="0 0 12 11"><rect x="1.500" y="2" width="9" height="7.500" fill="#444" stroke="#ccc" stroke-width="1"/><rect x="2" y="2.500" width="5" height="6.500" fill="#ddd"/></svg><i class="abs" style="left:16.500px;top:175.65px;width:0;height:0;border-left:2px solid transparent;border-bottom:2px solid #aaa"></i>
<svg class="abs" style="left:4px;top:179.90px" width="12" height="11" viewBox="0 0 12 11"><path d="M6,1.500 C8.500,1.500 10.500,3 10.500,5 C10.500,7 8,8 6,8 L3,10.500 L3.500,7.500 C2,7 1.500,6 1.500,5 C1.500,3 3.500,1.500 6,1.500Z" fill="#ccc"/></svg><i class="abs" style="left:16.500px;top:189.40px;width:0;height:0;border-left:2px solid transparent;border-bottom:2px solid #aaa"></i>
<svg class="abs" style="left:4px;top:193.65px" width="12" height="11" viewBox="0 0 12 11"><circle cx="4.500" cy="4" r="2.800" fill="#ddd"/><path d="M6.500,6 L10,10" stroke="#ccc" stroke-width="1.600"/></svg><i class="abs" style="left:16.500px;top:203.15px;width:0;height:0;border-left:2px solid transparent;border-bottom:2px solid #aaa"></i>
<svg class="abs" style="left:4px;top:207.40px" width="12" height="11" viewBox="0 0 12 11"><path d="M2,10.500 L4,5 L7.500,1 L10.500,4 L6.500,7.500 Z" fill="#ddd"/><circle cx="6.300" cy="5.500" r="0.900" fill="#444"/></svg><i class="abs" style="left:16.500px;top:216.90px;width:0;height:0;border-left:2px solid transparent;border-bottom:2px solid #aaa"></i>
<svg class="abs" style="left:4px;top:221.15px" width="12" height="11" viewBox="0 0 12 11"><path d="M2,1.500 H10 V3.500 H9.200 V2.600 H6.700 V9.500 H7.800 V10.300 H4.200 V9.500 H5.300 V2.600 H2.800 V3.500 H2Z" fill="#ddd"/></svg><i class="abs" style="left:16.500px;top:230.65px;width:0;height:0;border-left:2px solid transparent;border-bottom:2px solid #aaa"></i>
<svg class="abs" style="left:4px;top:234.90px" width="12" height="11" viewBox="0 0 12 11"><path d="M3,1 L3,9.500 L5,7.500 L6.500,10.500 L7.800,10 L6.300,7 L9,7 Z" fill="#ddd"/></svg><i class="abs" style="left:16.500px;top:244.40px;width:0;height:0;border-left:2px solid transparent;border-bottom:2px solid #aaa"></i>
<svg class="abs" style="left:4px;top:248.65px" width="12" height="11" viewBox="0 0 12 11"><path d="M2,10 L10,2" stroke="#ccc" stroke-width="1.200"/></svg><i class="abs" style="left:16.500px;top:258.15px;width:0;height:0;border-left:2px solid transparent;border-bottom:2px solid #aaa"></i>
<svg class="abs" style="left:4px;top:262.40px" width="12" height="11" viewBox="0 0 12 11"><path d="M3,6 V3.500 a0.800,0.800 0 0 1 1.600,0 V2.300 a0.800,0.800 0 0 1 1.600,0 V2.800 a0.800,0.800 0 0 1 1.600,0 V3.800 a0.800,0.800 0 0 1 1.600,0 V7.500 C9.400,9.500 8,10.500 6,10.500 C4.500,10.500 3.500,9.500 2.500,8 L1.500,6.500 C1.500,5.800 2.300,5.500 3,6Z" fill="#ddd"/></svg>
<svg class="abs" style="left:4px;top:276.15px" width="12" height="11" viewBox="0 0 12 11"><circle cx="5" cy="4.500" r="3" fill="none" stroke="#ddd" stroke-width="1.400"/><path d="M7.200,7 L10.500,10.500" stroke="#ddd" stroke-width="1.700"/></svg>
<svg class="abs" style="left:3px;top:290px" width="15" height="8" viewBox="0 0 15 8"><rect x="0.500" y="2.500" width="3" height="3" fill="#111" stroke="#ccc" stroke-width="0.500"/><rect x="2" y="4" width="3" height="3" fill="#fff"/><path d="M9,2.500 C10.500,1.500 12,2 12.500,4" fill="none" stroke="#ccc" stroke-width="0.800"/><path d="M8.500,1 L8.500,3.500 L10.500,3Z M13.500,3.500 L11.500,4 L13,5.500Z" fill="#ccc"/></svg>
<i class="abs" style="left:9px;top:308px;width:8.500px;height:8.500px;background:#000;border:1px solid #999"></i>
<i class="abs" style="left:3px;top:302px;width:9.500px;height:9.500px;background:#fff;border:1px solid #888"></i>
<svg class="abs" style="left:4px;top:319px" width="12" height="9" viewBox="0 0 12 9"><rect x="0.500" y="0.500" width="10" height="7.500" fill="none" stroke="#ccc" stroke-width="1"/><circle cx="5.500" cy="4.200" r="2" fill="none" stroke="#ccc" stroke-width="0.800" stroke-dasharray="1,0.700"/></svg>
<svg class="abs" style="left:4px;top:332px" width="13" height="10" viewBox="0 0 13 10"><path d="M1,4 L10,1.500 L12,4 L3,7Z" fill="#ccc"/><path d="M1,6 L3,9 L12,6 L12,4.500 L3,7.500 L1,4.800Z" fill="#aaa"/></svg>
</div>
<div id="toolsbelow" class="abs"></div>
<div class="abs" style="left:0;top:95px;width:2px;height:52px;background:linear-gradient(#c8d8e4,#a9bccb 50%,#5d7890)"></div>
<!-- DOCK -->
<div id="dock" class="abs">
<div class="abs" style="left:0;top:0;width:147px;height:7px;background:#3f3f3f"></div><span class="abs" style="left:13px;top:0.5px;white-space:nowrap;font-size:5px;letter-spacing:-1.5px;color:#ddd">◂◂</span><span class="abs" style="left:139.5px;top:0.5px;white-space:nowrap;font-size:6px;letter-spacing:-1.500px;color:#f0f0f0">▸▸</span><div class="abs" style="left:1px;top:7px;width:18.500px;height:20px;background:#5c5c5c;border:1px solid #444"><svg class="abs" style="left:3px;top:4px" width="12" height="11" viewBox="0 0 12 11"><path d="M1.500,2 L10,8.500 M10,2 L1.500,8.500" stroke="#e6e6e6" stroke-width="1.500"/><circle cx="2" cy="9" r="1.300" fill="none" stroke="#e6e6e6" stroke-width="0.800"/><circle cx="10" cy="9" r="1.300" fill="none" stroke="#e6e6e6" stroke-width="0.800"/></svg></div><div class="abs" style="left:20.500px;top:7px;width:2px;height:504px;background:#3e3e3e"></div><div class="abs" style="left:30px;top:118px;width:1px;height:282px;background:#3e3e3e"></div><i class="abs" style="left:24px;top:169px;width:5px;height:10px;background:#f4f4f4"></i><i class="abs" style="left:23px;top:209px;width:7px;height:11px;background:#c8281c;border-radius:2px"></i><i class="abs" style="left:24.500px;top:153px;width:3px;height:6px;background:#8a8a8a"></i><i class="abs" style="left:24.500px;top:227px;width:3px;height:6px;background:#8a8a8a"></i><i class="abs" style="left:25px;top:240px;width:2px;height:7px;background:#7a7a7a"></i><i class="abs" style="left:25px;top:128px;width:2px;height:14px;background:#6a6a6a"></i><div class="abs" style="left:23px;top:7px;width:124px;height:9px;background:#424242"></div><div class="abs" style="left:23.500px;top:7.500px;width:17px;height:8.500px;background:#535353"></div><span class="abs" style="left:25px;top:9px;white-space:nowrap;color:#f0f0f0">字符</span><span class="abs" style="left:45px;top:9px;white-space:nowrap;color:#a0a0a0">段落</span><span class="abs" style="left:138px;top:9px;white-space:nowrap;font-size:5px;color:#ccc;letter-spacing:-1px">▾≡</span><i class="abs fb" style="left:25.5px;top:19px;width:46px;height:10px;"><span>宋体</span></i><i class="abs ab" style="left:72.5px;top:19px;width:8.5px;height:10px"><b></b></i><i class="abs fb" style="left:87.5px;top:19px;width:29px;height:10px;color:#999"><span>-</span></i><i class="abs ab" style="left:117.5px;top:19px;width:8.5px;height:10px"><b></b></i><span class="abs ic" style="left:24px;top:36px;">T<small>T</small></span><i class="abs fb" style="left:33px;top:35.5px;width:35px;height:10px;"><span>14 点</span></i><i class="abs ab" style="left:69px;top:35.5px;width:8.5px;height:10px"><b></b></i><span class="abs ic" style="left:83px;top:36px;"><small>A</small>A</span><i class="abs fb" style="left:91.5px;top:35.5px;width:32.5px;height:10px;"><span>(自动)</span></i><i class="abs ab" style="left:125px;top:35.5px;width:8.5px;height:10px"><b></b></i><span class="abs ic" style="left:23.5px;top:50px;font-size:6px">V<small>/</small>A</span><i class="abs fb" style="left:33px;top:48.5px;width:35px;height:10px;"><span></span></i><i class="abs ab" style="left:69px;top:48.5px;width:8.5px;height:10px"><b></b></i><span class="abs ic" style="left:82.5px;top:50px;font-size:6px;background:#777;color:#fff">VA</span><i class="abs fb" style="left:91.5px;top:48.5px;width:32.5px;height:10px;"><span>0</span></i><i class="abs ab" style="left:125px;top:48.5px;width:8.5px;height:10px"><b></b></i><span class="abs ic" style="left:25px;top:65px;font-size:6px">あ</span><i class="abs fb" style="left:33px;top:64px;width:32px;height:10px;"><span>0%</span></i><i class="abs ab" style="left:66.5px;top:64px;width:8.5px;height:10px"><b></b></i><span class="abs ic" style="left:24px;top:81px;">IT</span><i class="abs fb" style="left:33px;top:80px;width:28.5px;height:9.5px;"><span>100%</span></i><span class="abs ic" style="left:97px;top:81px;font-size:8px;transform:scaleX(1.3)">T</span><i class="abs fb" style="left:107.5px;top:80px;width:28.5px;height:9.5px;"><span>100%</span></i><span class="abs ic" style="left:24px;top:92.5px;font-size:6.500px">A<small>a</small></span><i class="abs fb" style="left:33px;top:91px;width:28.5px;height:9.5px;"><span>0 点</span></i><span class="abs" style="left:89.5px;top:93px;white-space:nowrap;color:#eee">颜色:</span><i class="abs" style="left:108.500px;top:91.500px;width:27.500px;height:9px;background:#fff;border:1px solid #888"></i><i class="abs" style="left:32.500px;top:105.500px;width:10.500px;height:11px;background:#383838;border:1px solid #2c2c2c;border-radius:1px"></i><span class="abs tt" style="left:33px;top:108.5px;font-weight:bold">T</span><span class="abs tt" style="left:44px;top:108.5px;font-style:italic">T</span><span class="abs tt" style="left:56.60000000000002px;top:108.5px;">TT</span><span class="abs tt" style="left:69px;top:108.5px;">T<small>r</small></span><span class="abs tt" style="left:82px;top:108.5px;">T<sup>1</sup></span><span class="abs tt" style="left:94.39999999999998px;top:108.5px;">T<sub>1</sub></span><span class="abs tt" style="left:107.60000000000002px;top:108.5px;text-decoration:underline">T</span><span class="abs tt" style="left:120px;top:108.5px;text-decoration:line-through">T</span><div class="abs" style="left:30.500px;top:118px;width:116.500px;height:5.500px;background:#3e3e3e"></div><span class="abs" style="left:137px;top:118px;white-space:nowrap;font-size:5px;letter-spacing:-1.5px;color:#ddd">▸▸</span><div class="abs" style="left:30.500px;top:123.500px;width:116.500px;height:9px;background:#424242"></div><div class="abs" style="left:31px;top:124px;width:17px;height:8.500px;background:#535353"></div><span class="abs" style="left:33.5px;top:125.5px;white-space:nowrap;color:#f0f0f0">图层</span><span class="abs" style="left:51px;top:125.5px;white-space:nowrap;color:#a0a0a0">通道</span><span class="abs" style="left:73px;top:125.5px;white-space:nowrap;color:#a0a0a0">路径</span><span class="abs" style="left:138px;top:125.5px;white-space:nowrap;font-size:5px;color:#ccc;letter-spacing:-1px">▾≡</span><i class="abs" style="left:33px;top:135px;width:41px;height:9.500px;background:#686868;border:1px solid #3c3c3c"><span class="abs" style="left:2px;top:1px;color:#f4f4f4;white-space:nowrap">ρ 类型</span><span class="abs" style="left:34px;top:0.500px;font-size:5px;color:#eee;line-height:3.500px">▴<br>▾</span></i><span class="abs" style="left:81px;top:136px;width:8px;text-align:center;font-size:7px;color:#ddd">▣</span><span class="abs" style="left:93.70000000000005px;top:136px;width:8px;text-align:center;font-size:7px;color:#ddd">◐</span><span class="abs" style="left:106px;top:136px;width:8px;text-align:center;font-size:7px;color:#ddd">T</span><span class="abs" style="left:118.60000000000002px;top:136px;width:8px;text-align:center;font-size:7px;color:#ddd">⛶</span><span class="abs" style="left:131.79999999999995px;top:136px;width:8px;text-align:center;font-size:7px;color:#ddd">▤</span><i class="abs" style="left:33px;top:149.5px;width:55.500px;height:9.500px;background:#686868;border:1px solid #3c3c3c"><span class="abs" style="left:3px;top:1px;color:#f4f4f4;white-space:nowrap">正常</span><span class="abs" style="left:48.500px;top:0.500px;font-size:5px;color:#eee;line-height:3.500px">▴<br>▾</span></i><span class="abs" style="left:94px;top:151px;white-space:nowrap;color:#eee">不透明度:</span><i class="abs fb" style="left:122.5px;top:149.5px;width:19.5px;height:9.5px;"><span style="left:1.500px;font-size:6px">100%</span></i><i class="abs ab" style="left:142.5px;top:149.5px;width:5px;height:9.5px"><b></b></i><span class="abs" style="left:33px;top:166px;white-space:nowrap;color:#eee">锁定:</span><svg class="abs" style="left:51px;top:164px" width="44" height="10" viewBox="0 0 44 10"><rect x="1.500" y="2" width="6" height="6" fill="#999"/><path d="M1.500,4h6M1.500,6h6M3.500,2v6M5.500,2v6" stroke="#555" stroke-width="0.600"/><path d="M12.500,9 L14,6.500 L19.500,1 L20.500,2 L15,7.500Z" fill="#e0e0e0"/><path d="M27.500,1.500v7M24,5h7" stroke="#ddd" stroke-width="0.900"/><path d="M27.500,0.500l-1.300,1.600h2.600zM27.500,9.500l-1.300,-1.600h2.600zM23,5l1.600,-1.300v2.600zM32,5l-1.600,-1.300v2.600z" fill="#ddd"/><rect x="36.500" y="4.500" width="6" height="4.500" fill="#ddd"/><path d="M37.700,4.500 V3 a1.800,1.800 0 0 1 3.600,0 V4.500" fill="none" stroke="#ddd" stroke-width="0.900"/></svg><span class="abs" style="left:106.5px;top:166px;white-space:nowrap;color:#eee">填充:</span><i class="abs fb" style="left:122.5px;top:164px;width:19.5px;height:9.5px;"><span style="left:1.500px;font-size:6px">100%</span></i><i class="abs ab" style="left:142.5px;top:164px;width:5px;height:9.5px"><b></b></i><div class="abs" style="left:31px;top:177.5px;width:116px;height:208px;background:#484848"></div><div class="abs" style="left:31px;top:177.5px;width:116px;height:19.500px;background:#535353;border-bottom:1px solid #404040"></div><div class="abs" style="left:46px;top:177.5px;width:101px;height:19.500px;background:#5c7a9b"></div><svg class="abs" style="left:34px;top:184.5px" width="8" height="6" viewBox="0 0 8 6"><path d="M0.500,3 C2,0.700 6,0.700 7.500,3 C6,5.300 2,5.300 0.500,3Z" fill="none" stroke="#ddd" stroke-width="0.900"/><circle cx="4" cy="3" r="1.100" fill="#ddd"/></svg><svg class="abs" style="left:47px;top:178.5px" width="14" height="18" viewBox="0 0 14 18"><rect x="0.500" y="0.500" width="13" height="17" fill="#f2ece8" stroke="#fff" stroke-width="1"/><rect x="2" y="2" width="10" height="14" fill="#f4e9e2"/><path d="M8,4 l2,0 l0.500,4 l-1,1 l0,5 l-1,0 l0,-5 l-1,-1Z" fill="#2a1a18"/></svg><span class="abs" style="left:65.5px;top:184.5px;white-space:nowrap;color:#fff">图层 1</span><div class="abs" style="left:31px;top:197px;width:116px;height:20.500px;background:#535353;border-bottom:1px solid #404040"></div><svg class="abs" style="left:34px;top:204.5px" width="8" height="6" viewBox="0 0 8 6"><path d="M0.500,3 C2,0.700 6,0.700 7.500,3 C6,5.300 2,5.300 0.500,3Z" fill="none" stroke="#ddd" stroke-width="0.900"/><circle cx="4" cy="3" r="1.100" fill="#ddd"/></svg><svg class="abs" style="left:47.39999999999998px;top:199.5px" width="13" height="16" viewBox="0 0 13 16"><rect width="13" height="16" fill="#fbf6f4"/><path d="M3,2.500 l2.500,0 l0.700,4 l-1,1 l0,5.500 l-1.500,0 l0,-5.500 l-1,-1Z" fill="#2a1a18"/><rect x="3.500" y="8" width="1.500" height="5" fill="#d8a08a"/></svg><span class="abs" style="left:65.5px;top:204.5px;white-space:nowrap;color:#eee">背景 拷贝</span><div class="abs" style="left:31px;top:217.5px;width:116px;height:20px;background:#535353;border-bottom:1px solid #404040"></div><svg class="abs" style="left:34px;top:225.5px" width="8" height="6" viewBox="0 0 8 6"><path d="M0.500,3 C2,0.700 6,0.700 7.500,3 C6,5.300 2,5.300 0.500,3Z" fill="none" stroke="#ddd" stroke-width="0.900"/><circle cx="4" cy="3" r="1.100" fill="#ddd"/></svg><i class="abs" style="left:47.39999999999998px;top:220.4px;width:13px;height:16px;background:#fff"></i><span class="abs" style="left:67px;top:225.5px;white-space:nowrap;color:#eee;font-style:italic">背景</span><svg class="abs" style="left:133px;top:224.5px" width="7" height="8" viewBox="0 0 7 8"><rect x="0.500" y="3.500" width="6" height="4" fill="#ddd"/><path d="M1.700,3.500 V2.500 a1.800,1.800 0 0 1 3.600,0 V3.500" fill="none" stroke="#ddd" stroke-width="0.900"/></svg><div class="abs" style="left:43.5px;top:177.5px;width:1px;height:60px;background:#444"></div><div class="abs" style="left:31px;top:385.5px;width:116px;height:14px;background:#535353;border-top:1px solid #3a3a3a;border-bottom:1px solid #3a3a3a"></div><svg class="abs" style="left:49.0px;top:388.5px" width="10" height="8" viewBox="0 0 10 8"><path d="M0.500,3 a1.500,1.500 0 0 1 1.500,-1.500 h1.500 M6,1.500 h1.500 a1.500,1.500 0 0 1 0,3 h-1.500 M3.500,4.500 h-1.500 a1.500,1.500 0 0 1 -1.500,-1.500 M3,3h3" fill="none" stroke="#999" stroke-width="0.900"/></svg><svg class="abs" style="left:62.9px;top:388.5px" width="10" height="8" viewBox="0 0 10 8"><text x="0" y="6" font-size="7" font-style="italic" font-family="Liberation Serif,serif" fill="#ddd">fx</text><path d="M7,6.500h2l-1,1z" fill="#ddd"/></svg><svg class="abs" style="left:76.8px;top:388.5px" width="10" height="8" viewBox="0 0 10 8"><rect x="0.500" y="0.500" width="8" height="6" fill="#ddd"/><circle cx="4.500" cy="3.500" r="1.800" fill="#555"/></svg><svg class="abs" style="left:90.7px;top:388.5px" width="10" height="8" viewBox="0 0 10 8"><circle cx="4" cy="3.500" r="3" fill="#ddd"/><path d="M4,0.500 a3,3 0 0 1 0,6z" fill="#666"/><path d="M7.500,6.500h2l-1,1z" fill="#ddd"/></svg><svg class="abs" style="left:104.6px;top:388.5px" width="10" height="8" viewBox="0 0 10 8"><path d="M0.500,1 h3 l1,1 h4.500 v5 h-8.500z" fill="#ddd"/></svg><svg class="abs" style="left:118.5px;top:388.5px" width="10" height="8" viewBox="0 0 10 8"><path d="M1,0.500 h6.500 v6.500 h-6.500z" fill="#ddd"/><path d="M1,4.500 l2.500,2.500 h-2.500z" fill="#555"/></svg><svg class="abs" style="left:132.4px;top:388.5px" width="10" height="8" viewBox="0 0 10 8"><path d="M1.500,2 h6 l-0.500,5.500 h-5z M1,1.500h7 M3.500,0.700h2" fill="#ddd" stroke="#ddd" stroke-width="0.700"/></svg><div class="abs" style="left:30.5px;top:442.5px;width:76px;height:15px;background:#525252;border-top:1.500px solid #3c3c3c;border-bottom:1.500px solid #3c3c3c;border-left:1px solid #444"></div><svg class="abs" style="left:49.0px;top:446.5px" width="10" height="8" viewBox="0 0 10 8"><path d="M0.500,3 a1.500,1.500 0 0 1 1.500,-1.500 h1.500 M6,1.500 h1.500 a1.500,1.500 0 0 1 0,3 h-1.500 M3.500,4.500 h-1.500 a1.500,1.500 0 0 1 -1.500,-1.500 M3,3h3" fill="none" stroke="#999" stroke-width="0.900"/></svg><svg class="abs" style="left:62.9px;top:446.5px" width="10" height="8" viewBox="0 0 10 8"><text x="0" y="6" font-size="7" font-style="italic" font-family="Liberation Serif,serif" fill="#ddd">fx</text><path d="M7,6.500h2l-1,1z" fill="#ddd"/></svg><svg class="abs" style="left:76.8px;top:446.5px" width="10" height="8" viewBox="0 0 10 8"><rect x="0.500" y="0.500" width="8" height="6" fill="#ddd"/><circle cx="4.500" cy="3.500" r="1.800" fill="#555"/></svg><svg class="abs" style="left:90.7px;top:446.5px" width="10" height="8" viewBox="0 0 10 8"><circle cx="4" cy="3.500" r="3" fill="#ddd"/><path d="M4,0.500 a3,3 0 0 1 0,6z" fill="#666"/><path d="M7.500,6.500h2l-1,1z" fill="#ddd"/></svg><div class="abs" style="left:134px;top:432.5px;width:24px;height:24px;border-radius:50%;background:radial-gradient(circle at 50% 45%,#5fd06c,#2fa846 70%,#1f8a38);border:1.500px solid #d8f0dc"></div><span class="abs" style="left:90px;top:499px;white-space:nowrap;font-size:5px;color:#ddd">▮</span></div>
<div class="abs" style="left:992px;top:48px;width:1px;height:102px;background:#474747"></div>
<!-- TASKBAR -->
<div id="taskbar" class="abs" style="background:linear-gradient(90deg,#2c5288 0,#3f6291 8%,#5a7396 20%,#6b7e9a 32%,#66799a 45%,#55688f 58%,#475a86 68%,#3c4f7c 78%,#2f4474 100%);border-top:1px solid #8ea2bd">
<div class="abs" style="left:0;top:0;width:1000px;height:19px;background:linear-gradient(rgba(255,255,255,0.08),rgba(255,255,255,0.0) 45%,rgba(0,0,20,0.06))"></div><div class="abs" style="left:192px;top:0;width:30px;height:19px;background:linear-gradient(rgba(225,230,242,0.9),rgba(190,200,222,0.8));border:1px solid rgba(235,240,250,0.55);border-radius:1.500px"></div><div class="abs" style="left:288px;top:0;width:30px;height:19px;background:rgba(215,225,240,0.45);border:1px solid rgba(235,240,250,0.55);border-radius:1.500px"></div><div class="abs" style="left:417px;top:0;width:31px;height:19px;background:rgba(215,225,240,0.45);border:1px solid rgba(235,240,250,0.55);border-radius:1.500px"></div><div class="abs" style="left:579px;top:0;width:30px;height:19px;background:linear-gradient(#f3c36a,#e8951e);border:1px solid rgba(235,240,250,0.55);border-radius:1.500px"></div><div class="abs" style="left:609px;top:0;width:31px;height:19px;background:rgba(220,230,245,0.22);border:1px solid rgba(235,240,250,0.55);border-radius:1.500px"></div><div class="abs" style="left:3.500px;top:-0.500px;width:20px;height:20px;border-radius:50%;background:radial-gradient(circle at 50% 40%,#9fd3f2,#3a86c8 55%,#1c4f8e);border:1px solid #b9d4ea"><svg class="abs" style="left:4px;top:4px" width="11" height="11" viewBox="0 0 10 10"><path d="M0.500,1.500 Q2.500,0.500 4.500,1.500 V4.500 Q2.500,3.700 0.500,4.500Z" fill="#e8582c"/><path d="M5.300,1.500 Q7.300,2.300 9.300,1.500 V4.500 Q7.300,5.300 5.300,4.500Z" fill="#7cc242"/><path d="M0.500,5.300 Q2.500,4.500 4.500,5.300 V8.300 Q2.500,7.500 0.500,8.300Z" fill="#3d9be0"/><path d="M5.300,5.300 Q7.300,6.100 9.300,5.300 V8.300 Q7.300,9.100 5.300,8.300Z" fill="#f5c21d"/></svg></div><svg class="abs" style="left:34.0px;top:0.5px" width="18" height="18" viewBox="0 0 16 16"><circle cx="5" cy="4.500" r="3.500" fill="#6cbf2e"/><circle cx="11" cy="4.500" r="3.500" fill="#3f7fd8"/><circle cx="5" cy="11" r="3.500" fill="#f2c417"/><circle cx="11" cy="11" r="3.500" fill="#e4502a"/></svg><svg class="abs" style="left:69.0px;top:0.5px" width="18" height="18" viewBox="0 0 16 16"><circle cx="8" cy="8.500" r="5.500" fill="none" stroke="#3aa0e8" stroke-width="3"/><path d="M3,8.500h10" stroke="#3aa0e8" stroke-width="2"/><path d="M1.500,12 C3,5 10,1 14.500,2.500" fill="none" stroke="#f3c93a" stroke-width="1.500"/></svg><svg class="abs" style="left:101.0px;top:0.5px" width="18" height="18" viewBox="0 0 16 16"><path d="M1.500,3 h5 l1,1.500 h7 v9 h-13z" fill="#e9cf83"/><rect x="3" y="5.500" width="10" height="4" fill="#f6f2e4"/><path d="M1.500,8 h13 v5.500 h-13z" fill="#f1dc9a"/><rect x="4" y="9.500" width="8" height="3.500" fill="#9cc4e8"/></svg><svg class="abs" style="left:132.0px;top:0.5px" width="18" height="18" viewBox="0 0 16 16"><rect x="2" y="1.500" width="12" height="13" rx="1.500" fill="#9fb6d4"/><circle cx="8" cy="8" r="4.500" fill="#f08a24"/><path d="M6.500,5.500 L11,8 L6.500,10.500Z" fill="#fff"/></svg><svg class="abs" style="left:165.0px;top:0.5px" width="18" height="18" viewBox="0 0 16 16"><rect x="1" y="1" width="14" height="14" rx="2" fill="#f2f6fb"/><path d="M3,4 C5,5 7,5.500 8,7 C9,5 11,3.500 13.500,3.500 C12.500,7 11,9.500 8.500,11 L7,13.500 L6.500,10.500 C4.500,9.500 3.500,7 3,4Z" fill="#2f8de0"/></svg><svg class="abs" style="left:198.0px;top:0.5px" width="18" height="18" viewBox="0 0 16 16"><rect x="1.500" y="1.500" width="13" height="13" fill="#0c2a4a" stroke="#6fb1e8" stroke-width="1"/><text x="3.300" y="11.500" font-size="8" font-weight="bold" font-family="Liberation Sans,sans-serif" fill="#8cc6f4">Ps</text></svg><svg class="abs" style="left:229.0px;top:0.5px" width="18" height="18" viewBox="0 0 16 16"><circle cx="8" cy="8" r="6.500" fill="#f1c21b"/><path d="M8,1.500 A6.500,6.500 0 0 1 14.500,8 L8,8Z" fill="#e8452c"/><path d="M1.500,8 A6.500,6.500 0 0 0 8,14.500 L8,8Z" fill="#58b947"/><path d="M8,14.500 A6.500,6.500 0 0 0 14.500,8 L8,8Z" fill="#7fcf4a"/></svg><svg class="abs" style="left:261.0px;top:0.5px" width="18" height="18" viewBox="0 0 16 16"><rect x="1.500" y="1.500" width="13" height="13" fill="#2a1a08" stroke="#f29a1f" stroke-width="1"/><text x="3.800" y="11.500" font-size="8" font-weight="bold" font-family="Liberation Sans,sans-serif" fill="#f7a629">Ai</text></svg><svg class="abs" style="left:294.0px;top:0.5px" width="18" height="18" viewBox="0 0 16 16"><circle cx="8" cy="8" r="6.500" fill="#4cc04a" stroke="#c9efc5" stroke-width="1"/><circle cx="8" cy="8" r="3.200" fill="none" stroke="#e6f8e2" stroke-width="1.400"/></svg><svg class="abs" style="left:327.0px;top:0.5px" width="18" height="18" viewBox="0 0 16 16"><rect x="3" y="1.500" width="10" height="13" fill="#f3f3f3"/><path d="M3,14.500 L7.500,2 L9,2 L13,14.500 L10,14.500 L8,7 L6,14.500Z" fill="#d8201f"/></svg><svg class="abs" style="left:359.0px;top:0.5px" width="18" height="18" viewBox="0 0 16 16"><path d="M2,5 L8,3 L14,5 L14,12 L8,14.500 L2,12Z" fill="#f39a1e"/><path d="M2,5 L8,7 L14,5 M8,7 V14.500" stroke="#ffd98a" stroke-width="1" fill="none"/><circle cx="8" cy="4" r="2" fill="#fbd36a"/></svg><svg class="abs" style="left:391.0px;top:0.5px" width="18" height="18" viewBox="0 0 16 16"><ellipse cx="8" cy="9" rx="6.500" ry="5" fill="#d9dde2"/><circle cx="8" cy="6" r="3.500" fill="#f2f4f6"/><circle cx="9" cy="9" r="2.200" fill="#5a6675"/></svg><svg class="abs" style="left:423.0px;top:0.5px" width="18" height="18" viewBox="0 0 16 16"><circle cx="8" cy="8" r="6.500" fill="#e8432f"/><path d="M8,8 L2.400,4.700 A6.500,6.500 0 0 0 6,14.200Z" fill="#3aa757"/><path d="M8,8 L6,14.200 A6.500,6.500 0 0 0 14.500,8Z" fill="#f7c61c"/><circle cx="8" cy="8" r="3" fill="#fff"/><circle cx="8" cy="8" r="2.200" fill="#4a8af4"/></svg><svg class="abs" style="left:455.0px;top:0.5px" width="18" height="18" viewBox="0 0 16 16"><circle cx="8" cy="8" r="6.500" fill="#e8661c"/><circle cx="8.500" cy="7" r="3.800" fill="#3a5fc0"/><path d="M2,6 C3,11 6,13.500 10,13.500 C6,12 4.500,9 5,5Z" fill="#f7a21c"/></svg><svg class="abs" style="left:488.0px;top:0.5px" width="18" height="18" viewBox="0 0 16 16"><rect x="1" y="1" width="14" height="14" rx="2" fill="#2f8fe6"/><path d="M3.500,5 L5.500,11.500 L8,6.500 L10.500,11.500 L12.500,5" fill="none" stroke="#fff" stroke-width="1.500"/></svg><svg class="abs" style="left:519.0px;top:0.5px" width="18" height="18" viewBox="0 0 16 16"><circle cx="8" cy="8" r="6.500" fill="#2d8fe8"/><path d="M5,10.500 C6,6 9,4.500 11.500,4.500 C11,8 9,11 5,10.500Z" fill="#cfe9ff"/></svg><svg class="abs" style="left:552.0px;top:0.5px" width="18" height="18" viewBox="0 0 16 16"><circle cx="8" cy="8" r="7" fill="#e9eef6"/><circle cx="8" cy="8" r="5.500" fill="#3a6cc8"/><path d="M10.500,5.500 C8,4 5.500,5.500 6.500,7.500 C7.500,9 10.500,8.500 10,10.500 C9.500,12 6.500,12 5,10.500" fill="none" stroke="#fff" stroke-width="1.500"/></svg><svg class="abs" style="left:585.0px;top:0.5px" width="18" height="18" viewBox="0 0 16 16"><rect x="1.500" y="1" width="13" height="14" fill="#2b97ea"/><text x="3" y="12" font-size="10" font-weight="bold" font-family="Noto Sans CJK SC,sans-serif" fill="#fff">今</text></svg><svg class="abs" style="left:616.0px;top:0.5px" width="18" height="18" viewBox="0 0 16 16"><rect x="1.500" y="1.500" width="13" height="13" fill="#cdb7c4"/><path d="M8,3 V13 M3.500,5.500 L8,8 L12.500,5.500 M5,12 L8,8 L11,12" stroke="#d4204a" stroke-width="1.800" fill="none"/></svg><span class="abs" style="left:803px;top:6px;font-size:6px;color:#fff">CH</span><svg class="abs" style="left:813.0px;top:5px" width="9" height="9" viewBox="0 0 9 9"><rect x="0.500" y="2.500" width="8" height="5" fill="#d8dce2"/><path d="M1.500,4h6M1.500,6h6" stroke="#667" stroke-width="0.700" stroke-dasharray="1,0.500"/></svg><svg class="abs" style="left:825.0px;top:5px" width="9" height="9" viewBox="0 0 9 9"><circle cx="4.500" cy="4.500" r="4" fill="#2d4fd0" stroke="#b9c8f0" stroke-width="0.600"/><text x="2.800" y="7" font-size="6.500" font-weight="bold" font-family="Liberation Sans,sans-serif" fill="#fff">?</text></svg><svg class="abs" style="left:836.5px;top:5px" width="9" height="9" viewBox="0 0 9 9"><path d="M2.500,3.500 L4.500,1 L6.500,3.500Z M2.500,5.500 L4.500,8 L6.500,5.500Z" fill="#e8e8e8"/></svg><svg class="abs" style="left:847.5px;top:5px" width="9" height="9" viewBox="0 0 9 9"><rect x="0.500" y="0.500" width="8" height="8" fill="#e02a2a"/><path d="M2,4.500h5M4.500,2v5" stroke="#fff" stroke-width="1.300"/></svg><svg class="abs" style="left:861.0px;top:5px" width="9" height="9" viewBox="0 0 9 9"><circle cx="4.500" cy="4.500" r="3.800" fill="#e9c9a0"/><path d="M4.500,0.700 A3.800,3.800 0 0 1 8.300,4.500 L4.500,4.500Z" fill="#e45a2a"/><circle cx="4.500" cy="4.500" r="1.500" fill="#6a9ae0"/></svg><svg class="abs" style="left:873.0px;top:5px" width="9" height="9" viewBox="0 0 9 9"><path d="M4.500,0.500 L8,1.500 V5 C8,7 6,8.300 4.500,8.700 C3,8.300 1,7 1,5 V1.500Z" fill="#4ab848"/><path d="M4.500,0.500 V8.700 C3,8.300 1,7 1,5 V1.500Z" fill="#d8f0d0"/></svg><svg class="abs" style="left:885.5px;top:5px" width="9" height="9" viewBox="0 0 9 9"><rect x="0.500" y="0.500" width="8" height="8" rx="1.500" fill="#1f97ea"/><path d="M2,4.500 L4.500,2.500 L7,4.500 L4.500,6.500Z" fill="#d8f0ff"/></svg><svg class="abs" style="left:898.0px;top:5px" width="9" height="9" viewBox="0 0 9 9"><circle cx="4.500" cy="4.500" r="4" fill="#c8dc1c"/><circle cx="4.500" cy="4.500" r="1.800" fill="#3b5a1a"/></svg><svg class="abs" style="left:910.5px;top:5px" width="9" height="9" viewBox="0 0 9 9"><rect x="0.500" y="1.500" width="8" height="5.500" fill="#f0f0f0"/><rect x="1.500" y="2.500" width="5" height="3.500" fill="#345"/><path d="M3,8.300h3" stroke="#eee" stroke-width="0.800"/></svg><svg class="abs" style="left:922.5px;top:5px" width="9" height="9" viewBox="0 0 9 9"><path d="M1,3.300 h2 l2.500,-2.300 v7 l-2.500,-2.300 h-2z" fill="#f4f4f4"/><path d="M6.500,2.500 Q8,4.500 6.500,6.500" fill="none" stroke="#ddd" stroke-width="0.700"/></svg><svg class="abs" style="left:935.5px;top:5px" width="9" height="9" viewBox="0 0 9 9"><path d="M2,8.500 V1 M2,1.500 h5 l-1.500,1.800 l1.500,1.800 h-5" fill="#cfd6e0" stroke="#e8e8e8" stroke-width="0.800"/></svg><span class="abs" style="left:947px;top:2.500px;width:42px;text-align:center;font-size:6.900px;color:#fff">8:55</span><span class="abs" style="left:947px;top:11.500px;width:42px;text-align:center;font-size:6.900px;color:#fff">2017/2/23</span><div class="abs" style="left:988px;top:0;width:12px;height:20px;background:linear-gradient(rgba(255,255,255,0.4),rgba(255,255,255,0.22));border-left:1px solid rgba(255,255,255,0.45)"></div></div>
</body>
</html>
